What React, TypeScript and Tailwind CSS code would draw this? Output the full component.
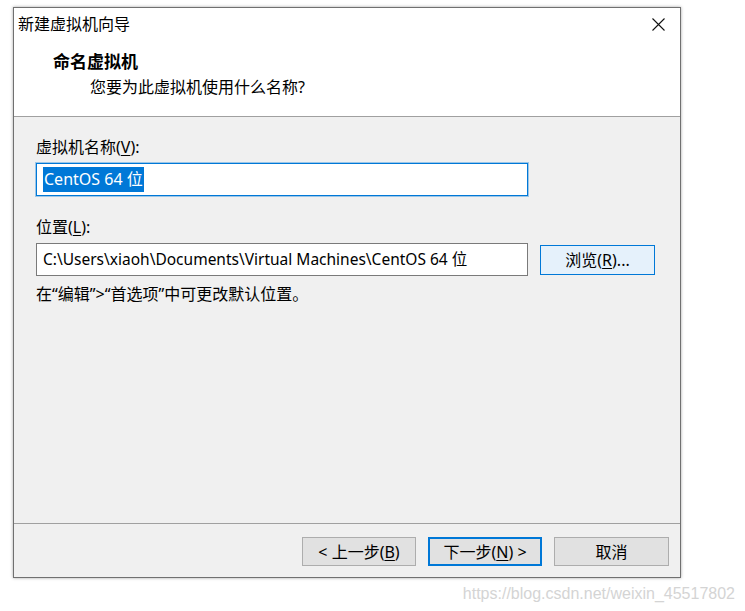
import React from 'react';

const U: React.FC<{ c: string }> = ({ c }) => <span className="underline underline-offset-2">{c}</span>;

const WinButton: React.FC<{ children: React.ReactNode; primary?: boolean; hover?: boolean; className?: string }> = ({ children, primary, hover, className }) => {
  let look = 'bg-[#e1e1e1] border border-[#adadad]';
  if (primary) look = 'bg-[#e1e1e1] border-2 border-[#0078d7]';
  if (hover) look = 'bg-[#e5f1fb] border border-[#0078d7]';
  return (
    <div className={`flex items-center justify-center text-[16px] text-black ${look} ${className ?? ''}`}>
      {children}
    </div>
  );
};

const App: React.FC = () => {
  return (
    <div
      className="w-[745px] h-[611px] bg-white overflow-hidden pt-[7px] pl-[13px]"
      style={{ fontFamily: '"Noto Sans", "Noto Sans CJK SC", sans-serif' }}
    >
      <div className="w-[668px] h-[571px] flex flex-col border border-[#707070] shadow-[0_0_3px_rgba(0,0,0,0.35)] bg-[#f0f0f0]">
        {/* title + header */}
        <div className="bg-white border-b border-[#a0a0a0] h-[109px]">
          <div className="h-[32px] flex items-center justify-between pl-[4px] pr-[15px]">
            <span className="text-[16px] text-black">新建虚拟机向导</span>
            <svg width="13" height="13" viewBox="0 0 13 13">
              <path d="M0.5 0.5 L12.5 12.5 M12.5 0.5 L0.5 12.5" stroke="#111" strokeWidth="1.1" fill="none" />
            </svg>
          </div>
          <div className="pt-[10px] pl-[39px]">
            <div className="text-[17px] font-bold leading-[24px] text-black">命名虚拟机</div>
            <div className="text-[16px] leading-[26px] pl-[37px] text-black">您要为此虚拟机使用什么名称?</div>
          </div>
        </div>

        {/* body */}
        <div className="flex-1 pl-[22px] pt-[20px]">
          <div className="text-[16px] leading-[21px] text-black">
            虚拟机名称(<U c="V" />):
          </div>
          <div className="mt-[5px] w-[492px] h-[33px] bg-white border border-[#0078d7] shadow-[0_0_0_1px_rgba(0,120,215,0.35)] flex items-center pl-[6px]">
            <span className="bg-[#0078d7] text-white text-[16px] leading-[25px] px-[1px]">CentOS 64 位</span>
          </div>

          <div className="mt-[21px] text-[16px] leading-[21px] text-black">
            位置(<U c="L" />):
          </div>
          <div className="mt-[5px] flex items-center">
            <div className="w-[492px] h-[33px] bg-white border border-[#7a7a7a] flex items-center pl-[6px]">
              <span className="text-[15.5px] text-black">C:\Users\xiaoh\Documents\Virtual Machines\CentOS 64 位</span>
            </div>
            <WinButton hover className="ml-[12px] w-[115px] h-[30px]">
              浏览(<U c="R" />)...
            </WinButton>
          </div>

          <div className="mt-[8px] text-[16px] leading-[21px] text-black">在“编辑”&gt;“首选项”中可更改默认位置。</div>
        </div>

        {/* footer */}
        <div className="h-[54px] border-t border-[#a0a0a0] flex justify-end items-start pt-[13px] pr-[11px] gap-[12px]">
          <WinButton className="w-[114px] h-[29px]">
            &lt; 上一步(<U c="B" />)
          </WinButton>
          <WinButton primary className="w-[114px] h-[29px]">
            下一步(<U c="N" />) &gt;
          </WinButton>
          <WinButton className="w-[115px] h-[29px]">取消</WinButton>
        </div>
      </div>

      <div className="flex justify-end pr-[10px] mt-[4px]">
        <span className="text-[16px] text-[#d4d4d4]" style={{ fontFamily: '"Liberation Sans", Arial, sans-serif' }}>
          https://blog.csdn.net/weixin_45517802
        </span>
      </div>
    </div>
  );
};

export default App;
